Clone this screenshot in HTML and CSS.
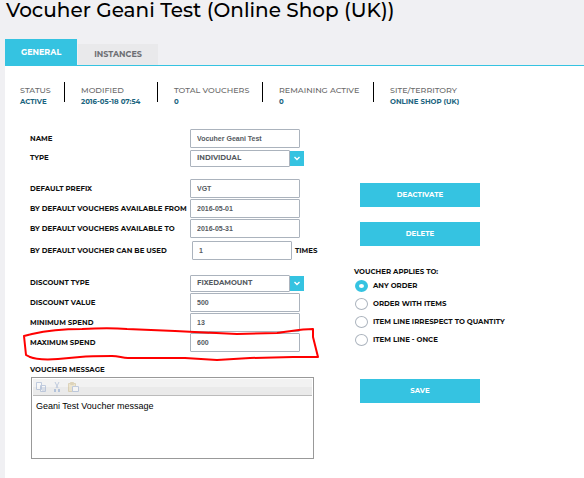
FILE: index.html
```html
<!DOCTYPE html>
<html lang="en">
<head>
<meta charset="utf-8">
<title>Voucher</title>
<link rel="stylesheet" href="styles.css">
</head>
<body>
<h1 class="title">Vocuher Geani Test (Online Shop (UK))</h1>
<nav class="tabs">
  <a class="tab tab-active" href="#general">General</a>
  <a class="tab" href="#instances">Instances</a>
</nav>
<main class="panel" id="general">
  <dl class="stats">
    <div class="stat"><dt>Status</dt><dd>Active</dd></div>
    <div class="stat"><dt>Modified</dt><dd>2016-05-18 07:54</dd></div>
    <div class="stat"><dt>Total vouchers</dt><dd>0</dd></div>
    <div class="stat"><dt>Remaining active</dt><dd>0</dd></div>
    <div class="stat"><dt>Site/Territory</dt><dd>Online Shop (UK)</dd></div>
  </dl>
  <form class="form">
    <div class="fields">
      <section class="group">
        <div class="row"><label for="name">Name</label><input class="box" id="name" value="Vocuher Geani Test"></div>
        <div class="row row-select"><label for="type">Type</label>
          <div class="select"><select id="type"><option>INDIVIDUAL</option></select><svg class="arrow" viewBox="0 0 14 15"><path d="M4.500 6 7 8.500 9.500 6"/></svg></div></div>
      </section>
      <section class="group">
        <div class="row"><label for="prefix">Default prefix</label><input class="box" id="prefix" value="VGT"></div>
        <div class="row"><label for="from">By default vouchers available from</label><input class="box" id="from" value="2016-05-01"></div>
        <div class="row"><label for="to">By default vouchers available to</label><input class="box" id="to" value="2016-05-31"></div>
        <div class="row row-times"><label for="used">By default voucher can be used</label><div class="times"><input class="box" id="used" value="1"><span>Times</span></div></div>
      </section>
      <section class="group">
        <div class="row row-select"><label for="dtype">Discount type</label>
          <div class="select"><select id="dtype"><option>FIXEDAMOUNT</option></select><svg class="arrow" viewBox="0 0 14 15"><path d="M4.500 6 7 8.500 9.500 6"/></svg></div></div>
        <div class="row"><label for="value">Discount value</label><input class="box" id="value" value="500"></div>
        <div class="row"><label for="min">Minimum spend</label><input class="box" id="min" value="13"></div>
        <div class="row row-marked"><label for="max">Maximum spend</label><input class="box" id="max" value="600">
          <svg class="mark" viewBox="0 0 300 40"><path d="M4 9 L12 7 C25 4 42 2 62 2 C80 1 95 1 107 2 L155 4 L217 7 L257 6 C268 5 280 2 293 2 L293 10 L298 30 L273 30 L230 31 L197 33 L165 31 L108 31 C102 31 99 29 92 29 C80 29 70 29 60 30 L38 32 C25 33 12 32 6 28 Z"/></svg>
        </div>
      </section>
      <section class="message">
        <label for="message">Voucher message</label>
        <div class="editor">
          <div class="toolbar">
            <button type="button" aria-label="Copy"><svg viewBox="0 0 12 12"><path class="page" d="M1.500 1.500h5v7h-5zM5.500 4.500h5v6h-5z"/><path class="ink" d="M7 7h3M7 9h3"/></svg></button>
            <button type="button" aria-label="Cut"><svg viewBox="0 0 12 12"><path class="ink" d="M4 1l3 6M8 1L5 7"/><path class="handle" d="M3 8h2v3H3zM7 8h2v3H7z"/></svg></button>
            <button type="button" aria-label="Paste"><svg viewBox="0 0 12 12"><path class="board" d="M1.500 2.500h7v8h-7zM3.500 1.500h3v2h-3z"/><path class="page" d="M5.500 5.500h6v5h-6z"/></svg></button>
          </div>
          <textarea id="message">Geani Test Voucher message</textarea>
        </div>
      </section>
    </div>
    <div class="side">
      <div class="actions">
        <button class="button" type="button">Deactivate</button>
        <button class="button" type="button">Delete</button>
      </div>
      <fieldset class="applies">
        <legend>Voucher applies to:</legend>
        <label><input type="radio" name="applies" checked>Any order</label>
        <label><input type="radio" name="applies">Order with items</label>
        <label><input type="radio" name="applies">Item line irrespect to quantity</label>
        <label><input type="radio" name="applies">Item line - once</label>
      </fieldset>
      <button class="button" type="submit">Save</button>
    </div>
  </form>
</main>
</body>
</html>
```
FILE: styles.css
```css
* { box-sizing: border-box; }

body {
  margin: 0;
  min-height: 100vh;
  display: flex;
  flex-direction: column;
  background: #f0f0f3;
  color: #111;
  font: 700 7px/10px Montserrat, Inter, sans-serif;
}

.title {
  margin: 0 0 18px;
  padding-left: 6px;
  font-size: 20px;
  line-height: 20px;
  font-weight: 500;
  color: #000;
}

.tabs {
  display: flex;
  align-items: flex-end;
  gap: 1px;
  height: 28px;
  margin-left: 5px;
  border-bottom: 1px solid #35c3e1;
}

.tab {
  padding: 0 16px;
  line-height: 21px;
  font-size: 8px;
  font-weight: 700;
  text-transform: uppercase;
  text-decoration: none;
  color: #6d6e73;
  background: #e9e9eb;
}

.tab-active {
  line-height: 26px;
  color: #fff;
  background: #35c3e1;
}

.panel {
  flex: 1;
  margin-left: 5px;
  padding: 16px 0 18px 15px;
  background: #fff;
  text-transform: uppercase;
}

.stats {
  display: grid;
  grid-template-columns: 45px 93px 105px 111px 1fr;
  margin: 0;
}

.stat {
  height: 20px;
  padding: 3px 0 0 16px;
  border-right: 1px solid #000;
  white-space: nowrap;
}

.stat:first-child { padding-left: 0; }
.stat:last-child { border: 0; }

.stat dt {
  font-size: 8px;
  line-height: 11px;
  font-weight: 500;
  color: #6a6a6a;
}

.stat dd {
  margin: 0;
  line-height: 11px;
  color: #1b6580;
}

.form {
  display: grid;
  grid-template-columns: 284px 1fr;
  gap: 40px;
  padding: 27px 0 0 10px;
}

.group {
  display: grid;
  gap: 1px;
  margin-bottom: 12px;
}

.row {
  display: grid;
  grid-template-columns: 160px 1fr;
  align-items: center;
  white-space: nowrap;
}

.row-select { height: 18px; }

.box,
select {
  width: 110px;
  height: 19px;
  padding: 0 6px;
  border: 1px solid #abb3bd;
  border-radius: 1px;
  background: #fff;
  color: #555a61;
  font: 700 7px/10px "Liberation Sans", sans-serif;
}

.select { display: flex; align-items: center; }

select {
  appearance: none;
  width: 100px;
  height: 17px;
  font: 700 7px/10px Montserrat, Inter, sans-serif;
}

.arrow {
  width: 14px;
  height: 15px;
  background: #35c3e1;
}

.arrow path { fill: none; stroke: #fff; stroke-width: 1.4; }

.row-times { padding: 2px 0; }

.times {
  display: flex;
  align-items: center;
  gap: 3px;
  padding-left: 2px;
}

.times .box { width: 100px; }

.row-marked { position: relative; }

.mark {
  position: absolute;
  left: -10px;
  top: -6px;
  width: 300px;
  height: 40px;
  pointer-events: none;
}

.mark path {
  fill: none;
  stroke: #f00;
  stroke-width: 2;
  stroke-linejoin: round;
}

.message > label { display: block; line-height: 12px; }

.editor {
  margin: 1px 0 0 1px;
  padding: 1px;
  border: 1px solid #999;
}

.toolbar {
  display: flex;
  gap: 4px;
  height: 17px;
  padding: 1px 2px;
  border-bottom: 1px solid #bbb;
  background: linear-gradient(#f2f2f2 50%, #eaeaea 50%);
}

.toolbar button {
  width: 12px;
  height: 13px;
  padding: 0;
  border: 0;
  background: none;
  opacity: 0.5;
}

.toolbar svg { display: block; width: 12px; height: 12px; }
.page { fill: #fff; stroke: #8fa6cc; }
.ink { fill: none; stroke: #8fa6cc; }
.handle { fill: #7f9dcc; }
.board { fill: #e8d9b0; stroke: #c9b684; }

textarea {
  display: block;
  width: 100%;
  height: 61px;
  padding: 4px 3px;
  border: 0;
  resize: none;
  font: 9px/12px "Liberation Sans", sans-serif;
  color: #000;
}

.side { padding-top: 54px; }
.actions { display: grid; gap: 15px; }

.button {
  display: block;
  width: 120px;
  height: 24px;
  margin-left: 6px;
  padding: 0;
  border: 0;
  background: #35c3e1;
  color: #fff;
  font: 700 7px/10px Montserrat, Inter, sans-serif;
  text-transform: uppercase;
}

.applies {
  margin: 21px 0 30px;
  padding: 0;
  border: 0;
}

.applies legend { padding: 0; }

.applies label {
  display: flex;
  align-items: center;
  gap: 5px;
  height: 18px;
}

.applies input {
  appearance: none;
  width: 13px;
  height: 12px;
  margin: 0 0 0 1px;
  border: 1px solid #abb3bd;
  border-radius: 50%;
  background: #fff;
}

.applies input:checked {
  border: 4px solid #35c3e1;
}
```
